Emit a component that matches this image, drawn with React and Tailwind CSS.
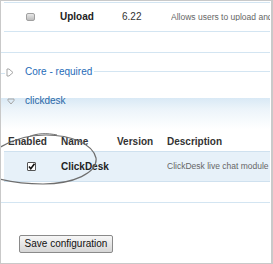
export default function App() {
  const font = { fontFamily: '"Liberation Sans", Arial, sans-serif' };
  return (
    <div
      className="relative w-[273px] h-[264px] overflow-hidden bg-white border border-r-2 border-[#c9c9c9] box-border flex flex-col"
      style={font}
    >
      {/* Upper table */}
      <div className="ml-[3px] mr-[1px] mt-[1px] flex flex-col">
        <div className="h-[30px] border-y border-[#d3e5f2] flex items-center text-[10px] leading-none">
          <div className="w-[56px] pl-[22px] flex items-center">
            <span className="block w-[9px] h-[8px] rounded-[2px] border border-[#a0a0a0] bg-gradient-to-b from-[#e8e8e8] to-[#bdbdbd]" />
          </div>
          <div className="w-[62px] font-bold text-[#222]">Upload</div>
          <div className="w-[49px] text-[#333]">6.22</div>
          <div className="flex-1 whitespace-nowrap overflow-hidden text-[8.5px] text-[#666]">
            Allows users to upload and attach files
          </div>
        </div>
      </div>

      <div className="mt-[20px] mr-[1px] border-t border-[#d3e5f2]" />

      {/* Core - required */}
      <div className="mt-[13px] h-[12px] flex items-center mr-[1px]">
        <div className="w-[4px] h-px bg-[#d3e5f2] mt-[2px]" />
        <svg width="8" height="9" viewBox="0 0 8 9" className="ml-[1px]">
          <path d="M1 1 L1 8 L3 8 L7 4.5 L3 1 Z" fill="none" stroke="#a5a5a5" strokeWidth="1" strokeLinejoin="round" />
        </svg>
        <span className="ml-[11px] text-[10px] leading-none text-[#1f6cb8]">Core - required</span>
        <div className="flex-1 h-px bg-[#d3e5f2] ml-[2px] -mt-[2px]" />
      </div>

      {/* clickdesk fieldset */}
      <div className="mt-[17px] mr-[1px] bg-[linear-gradient(to_bottom,#ffffff_3px,#d9e9f5_3px,#ecf4fa_14px,#ffffff_34px)] flex flex-col">
        <div className="h-[12px] flex items-center">
          <svg width="8" height="7" viewBox="0 0 8 7" className="ml-[6px]">
            <path d="M1 1 L7 1 L7 2.5 L4 6 L1 2.5 Z" fill="none" stroke="#a5a5a5" strokeWidth="1" strokeLinejoin="round" />
          </svg>
          <span className="ml-[10px] text-[10px] leading-none text-[#2a69a8]">clickdesk</span>
        </div>

        {/* header */}
        <div className="mt-[28px] ml-[3px] h-[14px] flex items-center text-[10px] leading-none font-bold text-[#333]">
          <div className="w-[57px] pl-[4px]">Enabled</div>
          <div className="w-[56px]">Name</div>
          <div className="w-[50px]">Version</div>
          <div className="flex-1">Description</div>
        </div>

        {/* row */}
        <div className="mt-[2px] ml-[3px] h-[31px] border-y border-[#cfe1ef] bg-[#e7f1f9] flex items-center text-[10px] leading-none">
          <div className="w-[57px] pl-[23px] flex items-center">
            <span className="relative block w-[9px] h-[9px] border border-[#555] bg-white rounded-[1px]">
              <svg width="9" height="9" viewBox="0 0 9 9" className="absolute -left-px -top-px">
                <path d="M2 4.5 L3.8 6.8 L7.5 1.8" fill="none" stroke="#111" strokeWidth="1.6" />
              </svg>
            </span>
          </div>
          <div className="w-[56px] font-bold text-[#222]">ClickDesk</div>
          <div className="w-[50px]" />
          <div className="flex-1 whitespace-nowrap overflow-hidden text-[8.5px] text-[#666]">
            ClickDesk live chat module
          </div>
        </div>
      </div>

      <div className="mt-[20px] mr-[1px] border-t border-[#d3e5f2]" />

      <div className="mt-[32px] ml-[18px]">
        <button className="w-[94px] h-[18px] border border-[#8a8a8a] rounded-[2px] bg-gradient-to-b from-[#f7f7f7] to-[#d6d6d6] text-[10px] leading-none text-[#111] flex items-center justify-center">
          Save configuration
        </button>
      </div>

      {/* hand-drawn circle */}
      <svg className="absolute left-0 top-0 pointer-events-none" width="273" height="264" viewBox="0 0 273 264">
        <path
          d="M-2 147 C 10 139, 24 134, 45 134 C 70 134, 92 143, 95 157 C 97 172, 72 183, 42 183 C 26 183, 10 181, -2 178"
          fill="none"
          stroke="#6e6e6e"
          strokeWidth="1.2"
        />
        <path d="M27 136 C 36 132, 46 132, 56 134" fill="none" stroke="#6e6e6e" strokeWidth="1" />
      </svg>
    </div>
  );
}
